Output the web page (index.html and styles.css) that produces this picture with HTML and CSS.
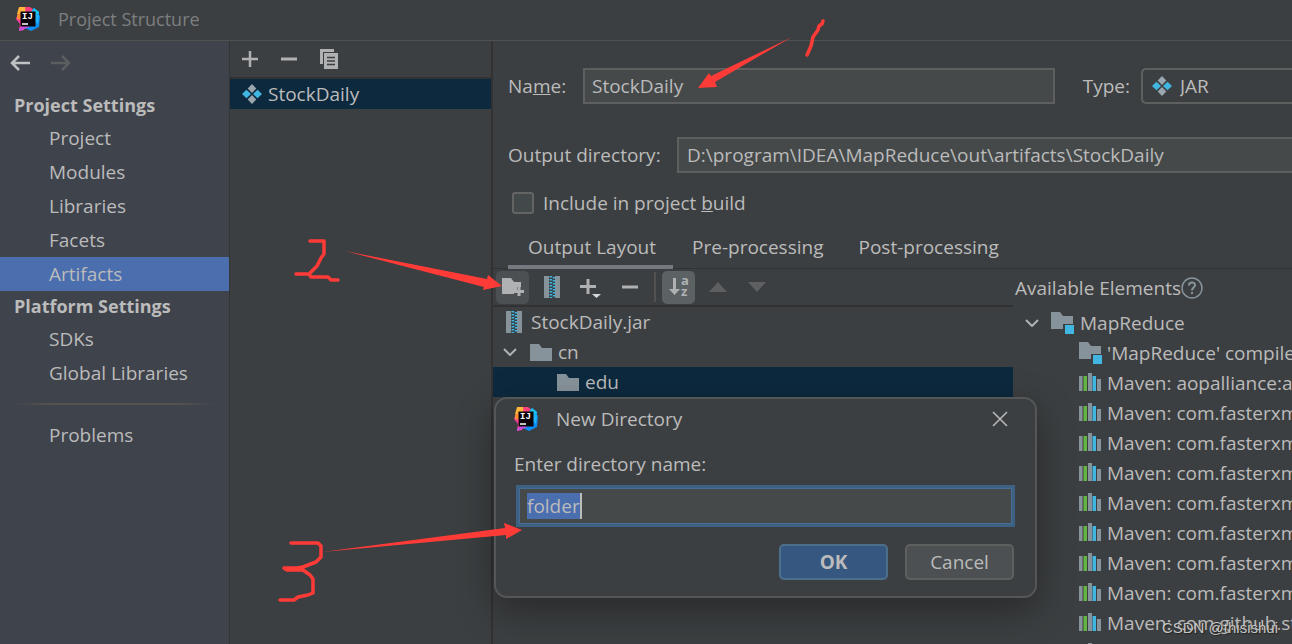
FILE: index.html
```html
<!DOCTYPE html>
<html lang="en">
<head>
<meta charset="utf-8">
<title>Project Structure</title>
<link rel="stylesheet" href="styles.css">
</head>
<body>
<svg class="defs" aria-hidden="true">
  <defs>
    <symbol id="idea" viewBox="0 0 24 24">
      <path d="M3 0h7l5 4-3 8-9 3 1-6-3-2z" fill="#ffb53a"/>
      <path d="M9 0h5l4 3 1 4-9 3z" fill="#fb3f7e"/>
      <path d="M0 12l1-3 4-1 5 6-2 9-5 1 1-7z" fill="#ff3f9d"/>
      <path d="M1 8l5-3v8l-5-1z" fill="#ff8b35"/>
      <path d="M15 5l3-4 5 4v3l1 1-1 11-8 4-6-3z" fill="#0a8df5"/>
      <path d="M15 5l3-4 5 4-1 3z" fill="#16c4ee"/>
      <path d="M19 7l4 1-1 9-3-3z" fill="#20b5fa"/>
      <path d="M3 22l5-4 6 2-6 2-5 2z" fill="#c44fe0"/>
      <path d="M4.500 4.500h15v15h-15z" fill="#0b0509"/>
      <path d="M6 17h6" stroke="#fff" stroke-width="1.500"/>
      <text x="6" y="12" class="logo-text">IJ</text>
    </symbol>
    <symbol id="artifact" viewBox="0 0 20 20">
      <path d="M10 0l4.300 4.500L10 9 5.700 4.500zM10 11l4.300 4.500L10 20l-4.300-4.500z" fill="#9aa7b0"/>
      <path d="M4.500 5.700L9 10l-4.500 4.300L0 10zM15.500 5.700L20 10l-4.500 4.300L11 10z" fill="#40b6e0"/>
    </symbol>
    <symbol id="folder" viewBox="0 0 22 17"><path d="M0 0h9l3 4h10v13H0z" fill="#87939a"/></symbol>
    <symbol id="module" viewBox="0 0 24 22"><path d="M0 0h9l3 4h10v8H12v5H0z" fill="#87939a"/><path d="M14 13h9v9h-9z" fill="#40b6e0"/></symbol>
    <symbol id="library" viewBox="0 0 22 20"><path d="M0 4h3.500v15H0zM9 1h4v18H9zM18 7h4v12h-4z" fill="#87939a"/><path d="M4.500 4H8v15H4.500z" fill="#62b543"/><path d="M13.500 4H17v15h-3.500z" fill="#40b6e0"/></symbol>
    <symbol id="jar" viewBox="0 0 16 22"><path d="M0 0h5v22H0zM11 0h5v22h-5z" fill="#87939a"/><path d="M7 0v22M10 1v22" stroke="#40b6e0" stroke-width="3" stroke-dasharray="1.500 1.500" fill="none"/><path d="M8.500 0v22" stroke="#31586a"/></symbol>
    <symbol id="plus" viewBox="0 0 16 16"><path d="M8 0v16M0 8h16" stroke="#afb1b3" stroke-width="2.500"/></symbol>
    <symbol id="minus" viewBox="0 0 16 16"><path d="M0 8h16" stroke="#afb1b3" stroke-width="3"/></symbol>
    <symbol id="chevron" viewBox="0 0 14 8"><path d="M1 1l6 6 6-6" stroke="#afb1b3" stroke-width="2" fill="none"/></symbol>
  </defs>
</svg>

<div class="window">
  <header class="titlebar">
    <svg class="logo"><use href="#idea"/></svg>
    <h1>Project Structure</h1>
  </header>

  <div class="body">
    <nav class="sidebar" aria-label="Settings">
      <div class="history">
        <button aria-label="Back"><svg width="20" height="16" viewBox="0 0 20 16" fill="none" stroke="#bfc1c3" stroke-width="2.500"><path d="M20 8H2M9 1L2 8l7 7"/></svg></button>
        <button aria-label="Forward" disabled><svg width="20" height="16" viewBox="0 0 20 16" fill="none" stroke="#5c5e60" stroke-width="2.500"><path d="M0 8h18M11 1l7 7-7 7"/></svg></button>
      </div>
      <h2>Project Settings</h2>
      <a href="#">Project</a>
      <a href="#">Modules</a>
      <a href="#">Libraries</a>
      <a href="#">Facets</a>
      <a href="#" class="current" aria-current="page">Artifacts</a>
      <h2>Platform Settings</h2>
      <a href="#">SDKs</a>
      <a href="#">Global Libraries</a>
      <hr>
      <a href="#">Problems</a>
    </nav>

    <section class="artifacts" aria-label="Artifacts">
      <div class="list-tools">
        <button aria-label="Add"><svg width="16" height="16"><use href="#plus"/></svg></button>
        <button aria-label="Remove"><svg width="16" height="16"><use href="#minus"/></svg></button>
        <button aria-label="Copy"><svg width="18" height="20" viewBox="0 0 18 20"><path d="M0 0h14v3H3v12H0z" fill="#afb1b3"/><path d="M4 4h14v16H4z" fill="#afb1b3"/><path d="M7 8.500h8M7 12h8M7 15.500h8" stroke="#3c3f41" stroke-width="1.500"/></svg></button>
      </div>
      <div class="list-row"><svg width="20" height="20"><use href="#artifact"/></svg>StockDaily</div>
    </section>

    <main class="editor">
      <div class="form">
        <div class="form-row name-row">
          <label for="name">Na<u>m</u>e:</label>
          <input id="name" class="text" type="text" value="StockDaily">
          <label for="type">Type:</label>
          <div class="combo">
            <svg width="20" height="20"><use href="#artifact"/></svg>
            <select id="type"><option>JAR</option></select>
          </div>
        </div>
        <div class="form-row dir-row">
          <label for="dir">Output directory:</label>
          <input id="dir" class="text open" type="text" value="D:\program\IDEA\MapReduce\out\artifacts\StockDaily">
        </div>
        <div class="form-row check-row">
          <input id="include" type="checkbox">
          <label for="include">Include in project <u>b</u>uild</label>
        </div>
      </div>

      <div class="tabs" role="tablist">
        <button role="tab" aria-selected="true">Output Layout</button>
        <button role="tab" aria-selected="false">Pre-processing</button>
        <button role="tab" aria-selected="false">Post-processing</button>
      </div>

      <div class="panes">
        <section class="layout" aria-label="Output layout">
          <div class="layout-tools">
            <button class="hover" aria-label="Create directory"><svg width="22" height="20" viewBox="0 0 22 20"><path d="M0 1h9l3 4h7v5h-4v3h-3v4H0z" fill="#afb1b3"/><path d="M17 10v9M12 14.500h10" stroke="#afb1b3" stroke-width="3"/></svg></button>
            <button aria-label="Create archive"><svg width="16" height="22"><use href="#jar"/></svg></button>
            <button aria-label="Add copy of"><svg width="21" height="22" viewBox="0 0 21 22"><path d="M8 3v15M0 10.500h16" stroke="#afb1b3" stroke-width="3"/><path d="M12 18h9l-4.500 4z" fill="#d5d7d8"/></svg></button>
            <button aria-label="Remove element"><svg width="16" height="16"><use href="#minus"/></svg></button>
            <span class="divider"></span>
            <button class="pressed" aria-label="Sort by name" aria-pressed="true"><svg width="20" height="20" viewBox="0 0 20 20"><path d="M4 1h3v11h4l-5.500 6L0 12h4z" fill="#afb1b3"/><text x="12" y="8" class="sort-text">a</text><text x="12" y="19" class="sort-text">z</text></svg></button>
            <button aria-label="Move up" disabled><svg width="18" height="10" viewBox="0 0 18 10"><path d="M0 10l9-10 9 10z" fill="#5d5f61"/></svg></button>
            <button aria-label="Move down" disabled><svg width="18" height="10" viewBox="0 0 18 10"><path d="M0 0l9 10 9-10z" fill="#5d5f61"/></svg></button>
          </div>
          <div class="tree">
            <div class="node root"><svg width="16" height="22"><use href="#jar"/></svg>StockDaily.jar</div>
            <div class="node branch"><svg class="chev"><use href="#chevron"/></svg><svg width="22" height="17"><use href="#folder"/></svg>cn</div>
            <div class="node leaf selected"><svg width="22" height="17"><use href="#folder"/></svg>edu</div>
          </div>
        </section>

        <section class="available">
          <h3>Available Elements<svg width="22" height="22" viewBox="0 0 22 22" fill="none" stroke="#87939a" stroke-width="1.500"><circle cx="11" cy="11" r="10"/><path d="M8 8.500c0-4 6-4 6-.5 0 2.500-3 2.500-3 5.500M11 15v2" stroke-width="2"/></svg></h3>
          <div class="node head"><svg class="chev"><use href="#chevron"/></svg><svg width="24" height="22"><use href="#module"/></svg>MapReduce</div>
          <div class="node item"><svg width="24" height="22"><use href="#module"/></svg>'MapReduce' compile output</div>
          <div class="node item"><svg class="lib"><use href="#library"/></svg>Maven: aopalliance:aopalliance:1.0</div>
          <div class="node item"><svg class="lib"><use href="#library"/></svg>Maven: com.fasterxml.jackson</div>
          <div class="node item"><svg class="lib"><use href="#library"/></svg>Maven: com.fasterxml.jackson</div>
          <div class="node item"><svg class="lib"><use href="#library"/></svg>Maven: com.fasterxml.jackson</div>
          <div class="node item"><svg class="lib"><use href="#library"/></svg>Maven: com.fasterxml.jackson</div>
          <div class="node item"><svg class="lib"><use href="#library"/></svg>Maven: com.fasterxml.jackson</div>
          <div class="node item"><svg class="lib"><use href="#library"/></svg>Maven: com.fasterxml.jackson</div>
          <div class="node item"><svg class="lib"><use href="#library"/></svg>Maven: com.fasterxml.jackson</div>
          <div class="node item"><svg class="lib"><use href="#library"/></svg>Maven: com.github.stephenc</div>
          <div class="node item"><svg class="lib"><use href="#library"/></svg></div>
        </section>
      </div>
    </main>
  </div>

  <form class="dialog" role="dialog" aria-labelledby="dialog-title">
    <div class="dialog-head">
      <svg class="logo"><use href="#idea"/></svg>
      <h2 id="dialog-title">New Directory</h2>
      <button type="button" class="close" aria-label="Close"><svg width="16" height="16" viewBox="0 0 16 16" stroke="#bbb" stroke-width="1.500"><path d="M1 1l14 14M15 1L1 15"/></svg></button>
    </div>
    <label for="folder-name">Enter directory name:</label>
    <div class="field"><input id="folder-name" type="text" value="folder" size="5"></div>
    <div class="actions">
      <button type="button" class="primary">OK</button>
      <button type="button">Cancel</button>
    </div>
  </form>

  <svg class="notes" width="1292" height="644" viewBox="0 0 1292 644" aria-hidden="true">
    <g fill="#ff3b38">
      <path d="M792 37L715 82l2 5-19 1 11-15 2 3z"/>
      <path d="M345 251l142 28 1-4 14 11-19 4 1-3z"/>
      <path d="M322 552l183-24-1-5 18 7-16 9v-4z"/>
    </g>
    <g fill="none" stroke="#ff3b38" stroke-width="3.500" stroke-linecap="round" stroke-linejoin="round">
      <path d="M823 21l-1 3-3 2-1 4-5 7-2 9-4 9"/>
      <path d="M310 241h14v13l-3 4-4 8-8 8h-13M309 274l2 3h17l3 3h7"/>
      <path d="M291 543h27l3 3v11l-5 5-13 5-6 1h-13l3 2h16l7 5 3 4v14l-5 2-10 2-4 3h-14"/>
    </g>
  </svg>
  <p class="watermark">CSDN @thisishui</p>
</div>
</body>
</html>
```
FILE: styles.css
```css
* { box-sizing: border-box; }

body {
  margin: 0;
  background: #3c3f41;
  color: #bbbbbb;
  font: 19px/26px "Open Sans", "Noto Sans", sans-serif;
}

button, input, select { font: inherit; color: inherit; }
button { padding: 0; border: 0; background: none; }
h1, h2, h3, p { margin: 0; font-size: inherit; font-weight: 400; }
svg { flex: none; display: block; }
.defs { position: absolute; width: 0; height: 0; }
.logo { width: 24px; height: 24px; }
.logo-text { font: bold 9px "Liberation Mono", monospace; fill: #fff; }

.window {
  position: relative;
  display: flex;
  flex-direction: column;
  height: 100vh;
  overflow: hidden;
}

.titlebar {
  display: flex;
  align-items: center;
  gap: 18px;
  height: 41px;
  padding: 0 0 2px 16px;
  border-bottom: 1px solid #515151;
  color: #7c7e80;
}
.titlebar h1 { font-size: 18px; }

.body { flex: 1; display: flex; min-height: 0; }

.sidebar {
  width: 230px;
  flex: none;
  background: #3f434c;
  border-right: 1px solid #323438;
}
.history { display: flex; align-items: center; gap: 21px; height: 49px; padding: 0 10px 5px; }
.sidebar h2 { padding-left: 14px; line-height: 31px; font-weight: 700; font-size: 18px; }
.sidebar a { display: block; padding-left: 49px; line-height: 34px; color: inherit; text-decoration: none; }
.sidebar .current { background: #4b6eaf; }
.sidebar hr {
  height: 2px;
  margin: 13px 12px;
  border: 0;
  background: linear-gradient(90deg, transparent, #55534f 20%, #55534f 80%, transparent);
}

.artifacts { width: 263px; flex: none; border-right: 2px solid #323232; }
.list-tools {
  display: flex;
  align-items: center;
  gap: 23px;
  height: 38px;
  padding-left: 12px;
  border-bottom: 2px solid #323232;
}
.list-row {
  display: flex;
  align-items: center;
  gap: 6px;
  height: 30px;
  padding-left: 12px;
  background: #0d293e;
}

.editor { flex: 1; min-width: 0; display: flex; flex-direction: column; }
.form { padding: 27px 0 0 15px; }
.form-row { display: flex; align-items: center; }
.name-row { height: 36px; margin-bottom: 33px; }
.name-row label:first-child { width: 75px; }
.dir-row { height: 36px; margin-bottom: 16px; }
.dir-row label { width: 169px; }
.text {
  flex: 1;
  min-width: 0;
  height: 36px;
  padding: 0 7px;
  border: 2px solid #5e6060;
  background: #45494a;
}
.text.open { padding-left: 8px; border-right: 0; }
.name-row .text { margin-right: 28px; }
.combo {
  display: flex;
  align-items: center;
  gap: 8px;
  width: 151px;
  height: 36px;
  margin-left: 11px;
  padding-left: 9px;
  border: 2px solid #5e6060;
  border-right: 0;
  border-radius: 5px 0 0 5px;
}
.combo select { flex: 1; appearance: none; padding: 0; border: 0; background: none; }
.check-row { gap: 9px; height: 28px; padding-left: 4px; }
.check-row input {
  appearance: none;
  width: 22px;
  height: 22px;
  margin: 0;
  border: 2px solid #646464;
  border-radius: 3px;
  background: #43494a;
}

.tabs {
  display: flex;
  gap: 2px;
  height: 52px;
  padding: 12px 0 0 15px;
  border-bottom: 1px solid #323232;
}
.tabs button { height: 40px; padding: 0 16px 0 17px; border-bottom: 4px solid transparent; }
.tabs [aria-selected="true"] { padding: 0 17px 0 20px; border-bottom-color: #747a80; }

.panes { flex: 1; display: flex; min-height: 0; }
.layout { flex: 1; min-width: 0; }
.layout-tools {
  display: flex;
  align-items: center;
  gap: 6px;
  height: 38px;
  padding-left: 3px;
  border-bottom: 2px solid #323232;
}
.layout-tools button {
  display: grid;
  place-items: center;
  width: 33px;
  height: 33px;
  border-radius: 5px;
}
.layout-tools .hover { background: #4c5052; }
.layout-tools .pressed { background: #5c6164; }
.layout-tools .divider { width: 2px; height: 30px; margin: 0 0 0 2px; background: #515151; }
.sort-text { font: bold 13px "Open Sans", sans-serif; fill: #afb1b3; }

.node { display: flex; align-items: center; gap: 6px; height: 30px; white-space: nowrap; }
.chev { width: 14px; height: 8px; margin-right: 7px; }
.root { gap: 9px; padding-left: 13px; }
.branch { padding-left: 10px; }
.leaf { padding-left: 64px; }
.selected { background: #0d293e; }

.available { width: 279px; flex: none; overflow: hidden; }
.available h3 { display: flex; align-items: center; height: 39px; padding: 0 0 2px 2px; }
.head { gap: 5px; padding-left: 12px; }
.item { gap: 4px; padding-left: 66px; }
.lib { width: 22px; height: 20px; margin: 0 2px 2px 0; }

.dialog {
  position: absolute;
  left: 494px;
  top: 397px;
  width: 543px;
  padding: 6px 21px 16px 18px;
  border: 2px solid #545658;
  border-radius: 13px;
  background: #3c3f41;
  box-shadow: 0 12px 36px rgba(0, 0, 0, 0.35);
}
.dialog-head { display: flex; align-items: center; gap: 18px; height: 28px; }
.close { margin: 0 6px 0 auto; }
.dialog label { display: block; margin: 18px 0 8px; }
.field {
  display: flex;
  align-items: center;
  height: 42px;
  margin: 0 -1px 0 2px;
  padding-left: 7px;
  border: 4px solid #3d6185;
  outline: 1px solid #466d94;
  outline-offset: -4px;
  background: #45494a;
}
.field input {
  field-sizing: content;
  height: 26px;
  padding: 0;
  border: 0;
  border-right: 2px solid #bbbbbb;
  outline: 0;
  background: #4b6eaf;
}
.actions { display: flex; justify-content: flex-end; gap: 17px; margin: 17px 0 0; }
.actions button {
  width: 109px;
  height: 36px;
  border: 2px solid #5e6060;
  border-radius: 5px;
  background: #4c5052;
}
.actions .primary { border-color: #4c708c; background: #365880; font-weight: 700; }

.notes { position: absolute; left: 0; top: 0; pointer-events: none; }
.watermark {
  position: absolute;
  right: 14px;
  bottom: 6px;
  color: #c4c4c4;
  font: 15px/20px "Liberation Sans", sans-serif;
  text-shadow: 1px 1px 1px #222;
}
```
